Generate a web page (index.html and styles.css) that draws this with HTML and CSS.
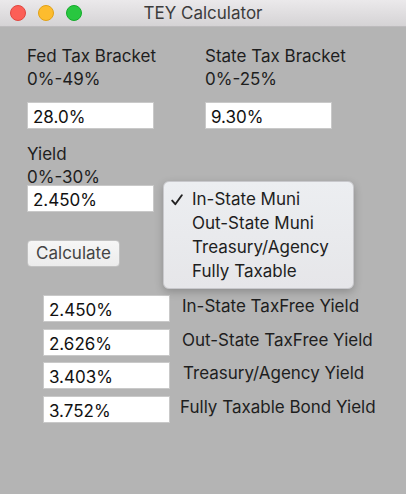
FILE: index.html
```html
<!DOCTYPE html>
<html>
<head>
<meta charset="utf-8">
<link rel="stylesheet" href="styles.css">
</head>
<body>
<div class="window">
  <div class="titlebar">
    <div class="lights">
      <span class="light red"></span>
      <span class="light yellow"></span>
      <span class="light green"></span>
    </div>
    <div class="title">TEY Calculator</div>
    <div></div>
  </div>
  <div class="content">
    <div class="top-row">
      <div class="field">
        <div class="label">Fed Tax Bracket</div>
        <div class="label">0%-49%</div>
        <div class="box top-box">28.0%</div>
      </div>
      <div class="field">
        <div class="label">State Tax Bracket</div>
        <div class="label">0%-25%</div>
        <div class="box top-box">9.30%</div>
      </div>
    </div>
    <div class="yield-field">
      <div class="label">Yield</div>
      <div class="label">0%-30%</div>
      <div class="box yield-box">2.450%</div>
    </div>
    <div class="button">Calculate</div>
    <div class="results">
      <div class="result-row">
        <div class="box">2.450%</div>
        <div class="result-label">In-State TaxFree Yield</div>
      </div>
      <div class="result-row">
        <div class="box">2.626%</div>
        <div class="result-label">Out-State TaxFree Yield</div>
      </div>
      <div class="result-row">
        <div class="box">3.403%</div>
        <div class="result-label shift-right">Treasury/Agency Yield</div>
      </div>
      <div class="result-row">
        <div class="box">3.752%</div>
        <div class="result-label shift-left">Fully Taxable Bond Yield</div>
      </div>
    </div>
    <div class="menu">
      <div class="menu-item"><svg class="check" width="12" height="12" viewBox="0 0 12 12"><path d="M1.2 6.6 L4.3 10.2 L10.8 1.2" fill="none" stroke="#222" stroke-width="1.9" stroke-linecap="round" stroke-linejoin="round"/></svg>In-State Muni</div>
      <div class="menu-item">Out-State Muni</div>
      <div class="menu-item">Treasury/Agency</div>
      <div class="menu-item">Fully Taxable</div>
    </div>
  </div>
</div>
</body>
</html>
```
FILE: styles.css
```css
html, body {
  margin: 0;
  padding: 0;
}
body {
  width: 406px;
  height: 494px;
  overflow: hidden;
  font-family: Inter, "Liberation Sans", sans-serif;
  font-size: 17px;
  color: #1e1e1e;
}
.window {
  width: 406px;
  height: 494px;
  background: #b4b4b4;
  position: relative;
}
.titlebar {
  height: 27px;
  box-sizing: border-box;
  display: grid;
  grid-template-columns: 1fr auto 1fr;
  align-items: center;
  background: linear-gradient(#ebe9eb, #d5d3d5);
  border-bottom: 1px solid #bdbbbd;
}
.lights {
  display: flex;
  gap: 12px;
  padding-left: 10px;
  padding-bottom: 1px;
}
.light {
  width: 16px;
  height: 16px;
  border-radius: 50%;
  box-sizing: border-box;
}
.red { background: #fc5f57; border: 1px solid #e2463f; }
.yellow { background: #fdbc2e; border: 1px solid #e1a116; }
.green { background: #29c740; border: 1px solid #13ab2a; }
.title {
  font-size: 17px;
  color: #3c3c3c;
  padding-bottom: 1px;
}
.content {
  padding: 18px 0 0 27px;
}
.top-row {
  display: flex;
}
.field {
  width: 178px;
}
.label {
  line-height: 23px;
  height: 23px;
}
.box {
  width: 127px;
  height: 27px;
  box-sizing: border-box;
  background: #ffffff;
  border: 1px solid #c9c9c9;
  padding: 3px 0 0 5px;
  line-height: 22px;
  color: #111;
}
.top-box {
  margin-top: 11px;
}
.yield-field {
  margin-top: 14px;
}
.yield-box {
  margin-top: -4px;
}
.button {
  margin-top: 28px;
  width: 93px;
  height: 27px;
  box-sizing: border-box;
  background: linear-gradient(#f6f6f6, #ececec);
  border: 1px solid #c2c2c2;
  border-radius: 4px;
  color: #444;
  text-align: center;
  line-height: 25px;
}
.results {
  margin-top: 28px;
  padding-left: 16px;
  display: flex;
  flex-direction: column;
  gap: 6.7px;
}
.result-row {
  display: flex;
  align-items: flex-start;
}
.result-label {
  margin-left: 12px;
  line-height: 23px;
}
.shift-right { margin-left: 13px; }
.shift-left { margin-left: 10px; }
.menu {
  position: absolute;
  left: 163px;
  top: 181px;
  width: 191px;
  box-sizing: border-box;
  padding: 5px 0;
  background: linear-gradient(#eceef1, #e6e6e9);
  border: 1px solid #c8c8cc;
  border-radius: 6px;
  box-shadow: 0 3px 9px rgba(0,0,0,0.22);
}
.menu-item {
  height: 24px;
  line-height: 24px;
  padding-left: 28px;
  position: relative;
  color: #1e1e1e;
}
.check {
  position: absolute;
  left: 7px;
  top: 7px;
}
```
